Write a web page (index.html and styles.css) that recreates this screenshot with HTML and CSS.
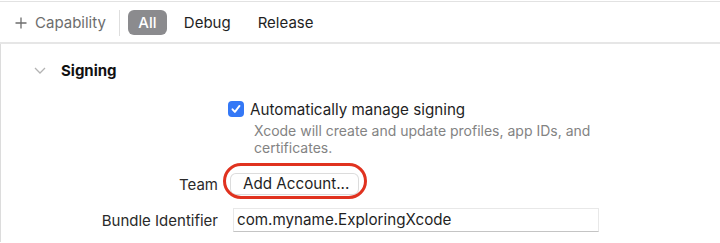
FILE: index.html
```html
<!DOCTYPE html>
<html>
    <head>
        <title>Signing &amp; Capabilities</title>
        <link rel="stylesheet" href="styles.css">
    </head>
    <body>
        <div class="toolbar">
            <span class="add-cap">
                <svg class="plus" width="12" height="12" viewBox="0 0 12 12"><path d="M6 0.5v11M0.5 6h11" stroke="#6d6d6d" stroke-width="1.3" fill="none"/></svg>
                Capability
            </span>
            <span class="divider"></span>
            <span class="tab active">All</span>
            <span class="tab debug">Debug</span>
            <span class="tab release">Release</span>
        </div>

        <div class="editor">
            <div class="section-head">
                <svg class="chevron" width="12" height="7" viewBox="0 0 12 7"><path d="M1 1l5 5 5-5" stroke="#b3b3b3" stroke-width="1.3" fill="none"/></svg>
                <span class="section-title">Signing</span>
            </div>

            <div class="form">
                <div class="row check-row">
                    <div class="label"></div>
                    <div class="value">
                        <span class="checkbox">
                            <svg width="12" height="12" viewBox="0 0 12 12"><path d="M2.5 6.3l2.4 2.6 4.6-6" stroke="#fff" stroke-width="1.9" fill="none" stroke-linecap="round" stroke-linejoin="round"/></svg>
                        </span>
                        Automatically manage signing
                    </div>
                </div>
                <div class="row help-row">
                    <div class="label"></div>
                    <div class="help">Xcode will create and update profiles, app IDs, and<br>certificates.</div>
                </div>
                <div class="row team-row">
                    <div class="label">Team</div>
                    <div class="value">
                        <span class="button">Add Account...
                            <span class="ring"></span>
                        </span>
                    </div>
                </div>
                <div class="row bundle-row">
                    <div class="label">Bundle Identifier</div>
                    <div class="value">
                        <div class="field">com.myname.ExploringXcode</div>
                    </div>
                </div>
            </div>
        </div>
    </body>
</html>
```

FILE: styles.css
```css
body{
    margin: 0;
    background: #fff;
    font-family: Inter, "Liberation Sans", sans-serif;
    font-size: 15.2px;
    color: #1f1f1f;
}

.toolbar{
    margin-top: 1px;
    border-top: 1px solid #e2e2e2;
    border-bottom: 2px solid #e6e6e6;
    height: 39px;
    padding-top: 1px;
    display: flex;
    align-items: center;
    padding-left: 15px;
}

.add-cap{
    display: flex;
    align-items: center;
    gap: 8px;
    color: #6d6d6d;
    font-size: 15px;
}

.divider{
    width: 1px;
    height: 26px;
    background: #dedede;
    margin-left: 13px;
    margin-right: 8px;
}

.tab{
    color: #1f1f1f;
    font-size: 15px;
}

.tab.active{
    width: 39px;
    height: 25px;
    line-height: 25px;
    text-align: center;
    border-radius: 6px;
    background: #8b8b8e;
    color: #fff;
    font-weight: 500;
}

.tab.debug{
    margin-left: 17px;
}

.tab.release{
    margin-left: 27px;
}

.editor{
    border-left: 1px solid #dcdcdc;
    height: 198px;
    overflow: hidden;
}

.section-head{
    margin-top: 14px;
    height: 24px;
    display: flex;
    align-items: center;
    padding-left: 33px;
}

.chevron{
    margin-right: 15px;
}

.section-title{
    font-weight: 700;
    font-size: 15px;
    color: #111;
}

.form{
    margin-top: 17px;
}

.row{
    display: flex;
}

.label{
    width: 217px;
    text-align: right;
    color: #2a2a2a;
    flex-shrink: 0;
    font-size: 15px;
}

.value{
    margin-left: 10px;
    display: flex;
    align-items: center;
}

.check-row{
    height: 20px;
    align-items: center;
}

.checkbox{
    width: 16px;
    height: 16px;
    border-radius: 4px;
    background: #3478f6;
    display: flex;
    align-items: center;
    justify-content: center;
    margin-right: 6px;
}

.help-row{
    margin-top: 3px;
}

.help{
    margin-left: 36px;
    font-size: 14px;
    line-height: 17px;
    color: #838383;
}

.team-row{
    margin-top: 17px;
    height: 22px;
    align-items: center;
}

.button{
    position: relative;
    margin-left: 3px;
    height: 20px;
    width: 115px;
    padding-left: 12px;
    line-height: 20px;
    border-radius: 5px;
    background: #fff;
    box-shadow: 0 0 0 1px #dcdcdc, 0 1px 1px rgba(0,0,0,0.12);
    color: #1f1f1f;
}

.ring{
    position: absolute;
    left: -8px;
    top: -11px;
    width: 138px;
    height: 30px;
    border: 3px solid #e0321f;
    border-radius: 18px;
}

.bundle-row{
    margin-top: 13px;
    height: 24px;
    align-items: center;
}

.field{
    margin-left: 5px;
    width: 361px;
    height: 22px;
    line-height: 22px;
    padding-left: 3px;
    border: 1px solid #e8e8e8;
    border-bottom-color: #c4c4c4;
    color: #1f1f1f;
}
```
